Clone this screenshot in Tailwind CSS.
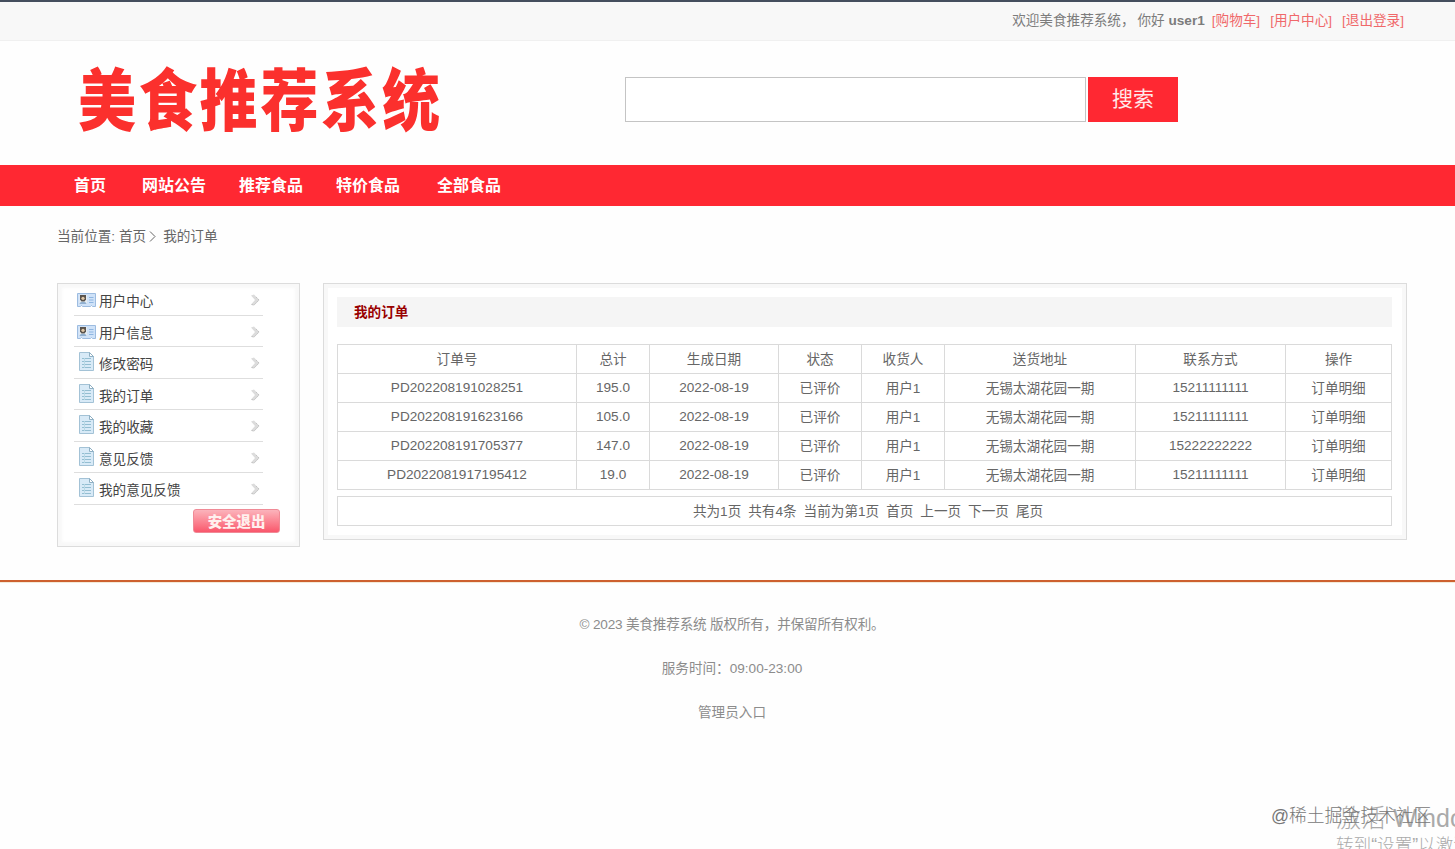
<!DOCTYPE html>
<html lang="zh-CN">
<head>
    <meta charset="UTF-8">
    <meta name="viewport" content="width=device-width, initial-scale=1.0">
    <title>美食推荐系统 - 我的订单</title>
    <script src="https://cdn.jsdelivr.net/npm/@tailwindcss/browser@4"></script>
    <style>
        body {
            font-family: 'Liberation Sans', 'Noto Sans CJK SC', sans-serif;
        }
    </style>
</head>
<body class="relative h-[849px] overflow-hidden bg-[#fefefe] text-[13.6px] leading-5 text-[#666]">
    <!-- Top bar -->
    <div class="flex h-[41px] justify-end border-t-2 border-b border-t-[#454e5e] border-b-[#f0f0f0] bg-[#f8f8f8] pt-[9px] pr-[51px] whitespace-nowrap text-[#7c7c7c]">
        <span>欢迎美食推荐系统，</span>
        <span class="ml-[3px]">你好 <b>user1</b></span>
        <a href="#" class="ml-[7px] text-[#f0686a]">[购物车]</a>
        <a href="#" class="ml-[10px] text-[#f0686a]">[用户中心]</a>
        <a href="#" class="ml-[10px] text-[#f0686a]">[退出登录]</a>
    </div>

    <!-- Logo and search -->
    <header class="flex h-[124px] items-start pl-[78px]">
        <h1 class="mt-[21px] h-20 w-[547px] origin-center scale-y-[1.15] text-[58px] leading-[80px] font-black tracking-[2.8px] whitespace-nowrap text-[#fb302d]">美食推荐系统</h1>
        <form class="mt-9 flex gap-[2px]">
            <input type="text" class="h-[45px] w-[461px] border border-[#c4c4c4] bg-white px-2 outline-none">
            <button type="button" class="h-[45px] w-[90px] bg-[#ff2832] pb-[2px] text-[21px] text-white/90">搜索</button>
        </form>
    </header>

    <!-- Navigation -->
    <nav class="flex h-[41px] items-center bg-[#ff2832] pl-[74px] text-base font-bold text-white">
        <a href="#">首页</a>
        <a href="#" class="ml-9">网站公告</a>
        <a href="#" class="ml-[33px]">推荐食品</a>
        <a href="#" class="ml-[33px]">特价食品</a>
        <a href="#" class="ml-[37px]">全部食品</a>
    </nav>

    <!-- Breadcrumb -->
    <div class="flex h-[77px] items-start pt-[21px] pl-[57px]">
        <span>当前位置: 首页</span>
        <svg class="mt-[4px] ml-[3px] h-[11px] w-[7px]" viewBox="0 0 7 11" fill="none" stroke="#666">
            <path d="M1 .5l5 5-5 5"/>
        </svg>
        <span class="ml-[7px]">我的订单</span>
    </div>

    <!-- Content -->
    <main class="flex h-[297px] items-start gap-[23px] pl-[57px]">
        <aside class="h-[264px] w-[243px] border border-[#dcdcdc] bg-white pl-4 shadow-[inset_0_0_3px_4px_#f8f8f8]">
            <ul id="menu"></ul>
            <button type="button" class="mt-1 ml-[119px] block h-6 w-[87px] rounded-[3px] border border-[#f08a96] bg-linear-to-b from-[#fbb3bb] via-[#fb8694] to-[#f9566c] pt-px text-[14.4px] leading-[22px] font-black text-[#fff0ee]">安全退出</button>
        </aside>

        <section class="h-[257px] w-[1084px] border border-[#dcdcdc] bg-white px-[13px] pt-[13px] shadow-[inset_0_0_0_4px_#f8f8f8]">
            <h2 class="h-[30px] w-[1055px] bg-[#f5f5f5] pt-px pl-[17px] leading-[30px] font-bold text-[#900]">我的订单</h2>
            <table class="mt-[17px] w-[1055px] table-fixed border-collapse text-center">
                <colgroup>
                    <col class="w-[239px]">
                    <col class="w-[73px]">
                    <col class="w-[129px]">
                    <col class="w-[83px]">
                    <col class="w-[83px]">
                    <col class="w-[191px]">
                    <col class="w-[150px]">
                    <col class="w-[106px]">
                </colgroup>
                <tbody id="orders"></tbody>
            </table>
            <div class="mt-[6px] flex h-[30px] w-[1055px] justify-center gap-[7px] border border-[#dadada] pt-px pl-[7px] leading-7">
                <span>共为1页</span>
                <span>共有4条</span>
                <span>当前为第1页</span>
                <a href="#">首页</a>
                <a href="#">上一页</a>
                <a href="#">下一页</a>
                <a href="#">尾页</a>
            </div>
        </section>
    </main>

    <!-- Footer -->
    <footer class="border-t-2 border-[#cd602f] text-center text-[#8c8c8c]">
        <div class="flex flex-col gap-6 border-t border-[#f3ead8] pt-8 pl-[9px]">
            <p class="tracking-[-0.18px]">© 2023 美食推荐系统 版权所有，并保留所有权利。</p>
            <p>服务时间：09:00-23:00</p>
            <p>管理员入口</p>
        </div>
    </footer>

    <!-- Watermarks -->
    <div class="absolute top-[803px] left-[1336px] w-[119px] overflow-hidden text-[25px] leading-[30px] font-light whitespace-nowrap text-[#aaa]">激活 Windows</div>
    <div class="absolute top-[833px] left-[1336px] h-4 w-[119px] overflow-hidden text-[17.6px] leading-[24px] font-light whitespace-nowrap text-[#aaa]">转到“设置”以激活 Windows。</div>
    <div class="absolute top-[803px] left-[1271px] text-[17.8px] leading-[26px] font-light whitespace-nowrap text-[#777]">@稀土掘金技术社区</div>

    <script>
        const cardIcon = `
            <svg class="mt-[9px] ml-[3px] h-[15px] w-[19px]" viewBox="0 0 19 15">
                <path d="M.5.5h18v13h-3l-1-1-1 1h-8l-1-1-1 1h-3z" fill="#cfe2f8" stroke="#9dbce0"/>
                <path d="M2.5 2h7.5v9H2.5z" fill="#e6edf2"/>
                <path d="M3 2h6v4.5L7.500 8.500h-3L3 6.500z" fill="#59534d"/>
                <circle cx="6" cy="5.3" r="1.6" fill="#dfc7a7"/>
                <path d="M2.500 11c0-3 7-3 7 0z" fill="#91b0d0"/>
                <path d="M12 4.500h4.500M12 7h4.500M12 9.500h4.500" stroke="#8fb6e1"/>
            </svg>`;
        const pageIcon = `
            <svg class="mt-[5px] ml-[5px] mr-[2px] h-[19px] w-[15px]" viewBox="0 0 15 19">
                <path d="M.5.5h10l4 4v14H.5z" fill="#d8eaf7" stroke="#a3c2d6"/>
                <path d="M10.500.5v4h4z" fill="#fff" stroke="#8fb0c4"/>
                <path d="M3 6.500h9M3 9.500h9M3 12.500h9M3 15.500h9" stroke="#94bed2"/>
                <path d="M5.500 6v10" stroke="#b9d9e6"/>
            </svg>`;
        const menu = [
            { name: '用户中心', icon: cardIcon },
            { name: '用户信息', icon: cardIcon },
            { name: '修改密码', icon: pageIcon },
            { name: '我的订单', icon: pageIcon },
            { name: '我的收藏', icon: pageIcon },
            { name: '意见反馈', icon: pageIcon },
            { name: '我的意见反馈', icon: pageIcon }
        ];

        document.getElementById('menu').innerHTML = menu.map(item => `
            <li class="flex h-[31.5px] w-[189px] items-start border-b border-[#dedede] text-[#444]">
                ${item.icon}
                <a href="#" class="ml-[3px] pt-2">${item.name}</a>
                <svg class="mt-[10px] mr-[3px] ml-auto h-3 w-[10px]" viewBox="0 0 10 12">
                    <path d="M1 1.500l3-1L9.500 6 4 11.500l-3-1L5 6z" fill="#dcdcdc"/>
                    <path d="M1.500 10.500L4 11l5-5-3-3" fill="none" stroke="#c4c4c4" stroke-dasharray="2 1"/>
                </svg>
            </li>`).join('');

        const orders = [
            ['订单号', '总计', '生成日期', '状态', '收货人', '送货地址', '联系方式', '操作'],
            ['PD202208191028251', '195.0', '2022-08-19', '已评价', '用户1', '无锡太湖花园一期', '15211111111', '订单明细'],
            ['PD202208191623166', '105.0', '2022-08-19', '已评价', '用户1', '无锡太湖花园一期', '15211111111', '订单明细'],
            ['PD202208191705377', '147.0', '2022-08-19', '已评价', '用户1', '无锡太湖花园一期', '15222222222', '订单明细'],
            ['PD2022081917195412', '19.0', '2022-08-19', '已评价', '用户1', '无锡太湖花园一期', '15211111111', '订单明细']
        ];

        // Chinese cells sit slightly lower than the numeric ones
        const cellClass = text => /[\u4e00-\u9fff]/.test(text) ? 'border border-[#dadada] pt-[2px]' : 'border border-[#dadada] p-0';

        document.getElementById('orders').innerHTML = orders.map(row => `
            <tr class="h-[29px]">
                ${row.map(cell => `<td class="${cellClass(cell)}">${cell}</td>`).join('')}
            </tr>`).join('');
    </script>
</body>
</html>
